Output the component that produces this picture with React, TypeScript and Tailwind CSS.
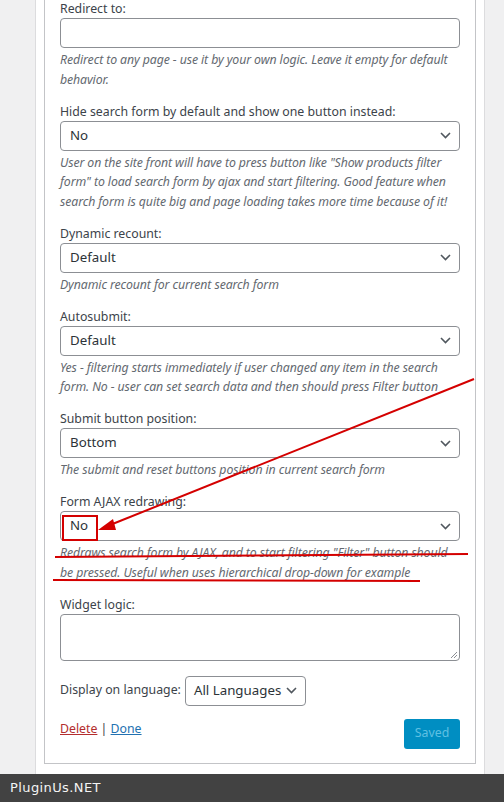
import React from "react";

const Chevron: React.FC = () => (
  <svg width="11" height="7" viewBox="0 0 11 7" className="shrink-0">
    <path d="M1 1l4.5 4.5L10 1" fill="none" stroke="#50575e" strokeWidth="1.6" />
  </svg>
);

const Select: React.FC<{ value: string }> = ({ value }) => (
  <div className="h-[30px] w-full border border-[#8c8f94] rounded-[4px] bg-white flex items-center justify-between pl-[9px] pr-[8px] text-[13.3px] text-[#2c3338]">
    <span>{value}</span>
    <Chevron />
  </div>
);

const Field: React.FC<{ label: string; children: React.ReactNode; desc?: React.ReactNode }> = ({
  label,
  children,
  desc,
}) => (
  <div className="mb-[13.5px]">
    <div className="leading-[18px] text-[12.3px] text-[#3c434a] whitespace-nowrap">{label}</div>
    {children}
    {desc && (
      <p className="mt-[2px] leading-[19.5px] text-[12.3px] italic text-[#646970] whitespace-nowrap tracking-[-0.1px]">
        {desc}
      </p>
    )}
  </div>
);

export default function App() {
  return (
    <div className="relative min-h-[802px] bg-[#f0f0f1] flex flex-col font-['Noto_Sans',sans-serif]">
      <div className="flex-1 w-[450px] ml-[35px] bg-white border-x border-[#dcdcde] px-[8px] pb-[10px]">
        <div className="border-x border-b border-[#c3c4c7] px-[15px] pb-[14px]">
          <Field
            label="Redirect to:"
            desc={
              <>
                Redirect to any page - use it by your own logic. Leave it empty for default
                <br />
                behavior.
              </>
            }
          >
            <div className="h-[30px] w-full border border-[#8c8f94] rounded-[4px] bg-white" />
          </Field>

          <Field
            label="Hide search form by default and show one button instead:"
            desc={
              <>
                User on the site front will have to press button like "Show products filter
                <br />
                form" to load search form by ajax and start filtering. Good feature when
                <br />
                search form is quite big and page loading takes more time because of it!
              </>
            }
          >
            <Select value="No" />
          </Field>

          <Field label="Dynamic recount:" desc="Dynamic recount for current search form">
            <Select value="Default" />
          </Field>

          <Field
            label="Autosubmit:"
            desc={
              <>
                Yes - filtering starts immediately if user changed any item in the search
                <br />
                form. No - user can set search data and then should press Filter button
              </>
            }
          >
            <Select value="Default" />
          </Field>

          <Field label="Submit button position:" desc="The submit and reset buttons position in current search form">
            <Select value="Bottom" />
          </Field>

          <Field
            label="Form AJAX redrawing:"
            desc={
              <>
                Redraws search form by AJAX, and to start filtering "Filter" button should
                <br />
                be pressed. Useful when uses hierarchical drop-down for example
              </>
            }
          >
            <Select value="No" />
          </Field>

          <Field label="Widget logic:">
            <div className="relative h-[47px] w-full border border-[#8c8f94] rounded-[4px] bg-white">
              <svg width="8" height="8" viewBox="0 0 8 8" className="absolute right-[1px] bottom-[1px]">
                <path d="M7 1L1 7M7 4L4 7" stroke="#8c8f94" strokeWidth="1" />
              </svg>
            </div>
          </Field>

          <div className="mt-[15px] flex items-center gap-[4px] text-[12.3px] text-[#3c434a]">
            <span>Display on language:</span>
            <div className="h-[30px] w-[121px] border border-[#8c8f94] rounded-[4px] flex items-center justify-between pl-[8px] pr-[8px] text-[13.3px] text-[#2c3338]">
              <span>All Languages</span>
              <Chevron />
            </div>
          </div>

          <div className="mt-[13px] flex items-start justify-between text-[12.3px]">
            <div className="leading-[19px] text-[#3c434a]">
              <span className="text-[#b32d2e] underline">Delete</span> |{" "}
              <span className="text-[#2271b1] underline">Done</span>
            </div>
            <div className="h-[30px] w-[56px] rounded-[3px] bg-[#008ec2] text-[#5fc0e3] flex items-center justify-center">
              Saved
            </div>
          </div>
        </div>
      </div>
      <footer className="h-[28px] bg-[#424242] flex items-center pl-[10px] text-[13px] text-[#f4f4f4] font-['DejaVu_Sans',sans-serif] tracking-[0.4px]">
        PluginUs.NET
      </footer>

      <svg className="absolute left-0 top-0 pointer-events-none" width="504" height="802" viewBox="0 0 504 802">
        <line x1="474" y1="379" x2="110" y2="525" stroke="#d40000" strokeWidth="2" />
        <polygon points="98,530 113,519 116,530" fill="#d40000" />
        <rect x="63" y="516" width="34" height="24" fill="none" stroke="#d40000" strokeWidth="2" />
        <line x1="55" y1="557" x2="468" y2="554" stroke="#d40000" strokeWidth="2" />
        <line x1="53" y1="580" x2="420" y2="581" stroke="#d40000" strokeWidth="2" />
      </svg>
    </div>
  );
}
